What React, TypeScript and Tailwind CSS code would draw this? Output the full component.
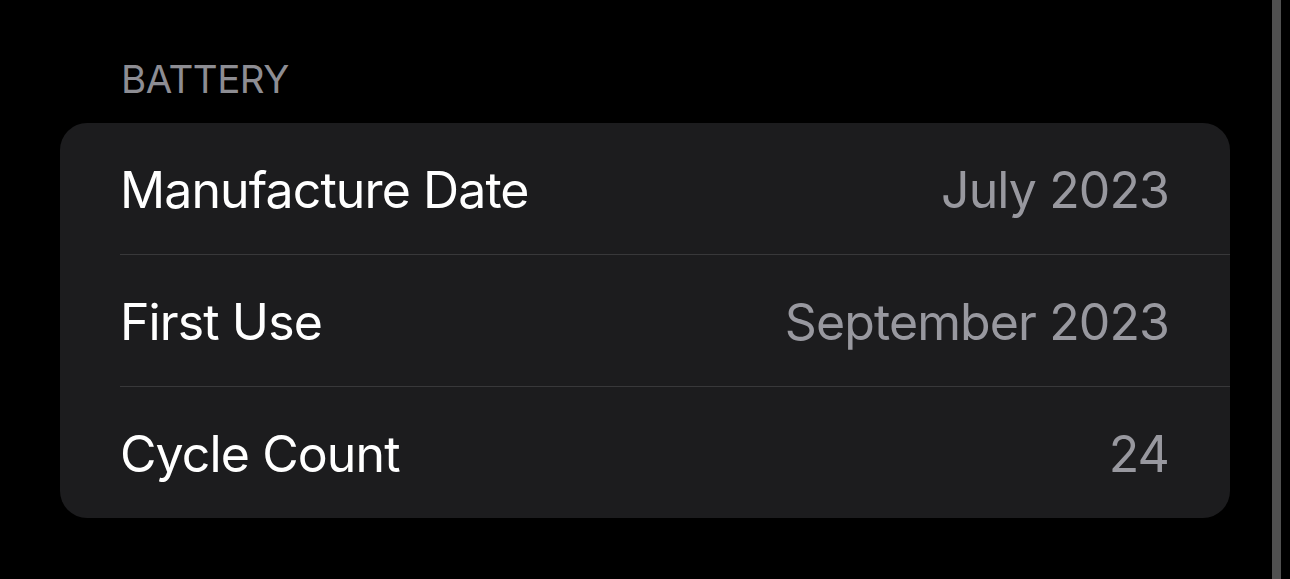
const rows = [
  { label: "Manufacture Date", value: "July 2023" },
  { label: "First Use", value: "September 2023" },
  { label: "Cycle Count", value: "24" },
];

export default function App() {
  return (
    <div
      className="flex h-[579px] w-[1290px] bg-black"
      style={{ fontFamily: "Inter, 'Noto Sans', sans-serif" }}
    >
      <div className="flex-1 pl-[60px] pr-[42px] pt-[60px]">
        <p className="pl-[61px] text-[38.5px] leading-[39px] tracking-[-0.5px] text-[#8d8d93]">
          BATTERY
        </p>
        <div className="mt-[24px] rounded-[27px] bg-[#1c1c1e]">
          {rows.map((row, i) => (
            <div
              key={row.label}
              className={`ml-[60px] flex items-center justify-between pr-[61px] pt-[3px] ${
                i < rows.length - 1
                  ? "h-[132px] border-b border-[#38383a]"
                  : "h-[131px]"
              }`}
            >
              <span className="text-[50px] leading-none tracking-[-0.9px] text-white">
                {row.label}
              </span>
              <span className="text-[50px] leading-none tracking-[-0.9px] text-[#98989f]">
                {row.value}
              </span>
            </div>
          ))}
        </div>
      </div>
      {/* scroll indicator */}
      <div className="w-[9px] bg-[#505050]" />
      <div className="w-[9px]" />
    </div>
  );
}
